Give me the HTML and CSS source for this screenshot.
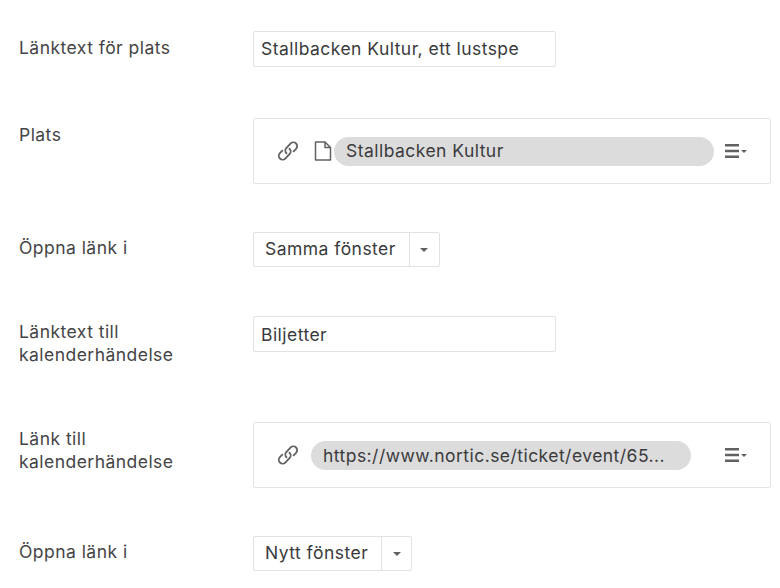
FILE: index.html
```html
<!DOCTYPE html>
<html lang="sv">
<head>
<meta charset="utf-8">
<title>Länkar</title>
<link rel="stylesheet" href="styles.css">
</head>
<body>
<svg width="0" height="0" class="defs">
  <defs>
    <symbol id="i-link" viewBox="0 0 24 24">
      <path d="M10.4 14.4a4 4 0 0 1-.3-5.600l4.900-5a4.100 4.100 0 0 1 5.800 5.800l-2.600 2.700M13.600 9.600a4 4 0 0 1 .3 5.600l-4.900 5a4.100 4.100 0 0 1-5.800-5.800l2.600-2.700" fill="none" stroke="currentColor" stroke-width="2" stroke-linecap="round"/>
    </symbol>
    <symbol id="i-page" viewBox="0 0 18 20">
      <path d="M1.500 1h9.500l5.500 5.500V19H1.500zM11 1v5.500h5.500" fill="none" stroke="currentColor" stroke-width="1.500" stroke-linejoin="round"/>
    </symbol>
    <symbol id="i-menu" viewBox="0 0 24 14">
      <path d="M0 0h14v2.400H0zM0 5.800h14v2.400H0zM0 11.600h14v2.400H0z" fill="currentColor"/>
      <path d="M16 6h6l-3 3z" fill="currentColor"/>
    </symbol>
  </defs>
</svg>
<form class="form">
  <div class="row gap-51">
    <label class="label label-low">Länktext för plats</label>
    <div class="input input-high">Stallbacken Kultur, ett lustspe</div>
  </div>
  <div class="row gap-48">
    <label class="label label-low">Plats</label>
    <div class="picker">
      <svg class="icon link"><use href="#i-link"/></svg>
      <svg class="icon page"><use href="#i-page"/></svg>
      <span class="pill pill-wide">Stallbacken Kultur</span>
      <svg class="icon menu"><use href="#i-menu"/></svg>
    </div>
  </div>
  <div class="row gap-49">
    <label class="label">Öppna länk i</label>
    <div class="select"><span class="select-text">Samma fönster</span><span class="select-btn"><i class="caret"></i></span></div>
  </div>
  <div class="row gap-56">
    <label class="label">Länktext till<br>kalenderhändelse</label>
    <div class="input">Biljetter</div>
  </div>
  <div class="row gap-48">
    <label class="label label-low">Länk till<br>kalenderhändelse</label>
    <div class="picker">
      <svg class="icon link"><use href="#i-link"/></svg>
      <span class="pill pill-url">https://www.nortic.se/ticket/event/65...</span>
      <svg class="icon menu menu-push"><use href="#i-menu"/></svg>
    </div>
  </div>
  <div class="row">
    <label class="label">Öppna länk i</label>
    <div class="select"><span class="select-text">Nytt fönster</span><span class="select-btn"><i class="caret"></i></span></div>
  </div>
</form>
</body>
</html>
```
FILE: styles.css
```css
html, body {
  margin: 0;
  background: #fff;
}
body {
  width: 780px;
  height: 588px;
  overflow: hidden;
  font-family: Inter, "Liberation Sans", sans-serif;
  font-size: 17.5px;
  letter-spacing: 0.46px;
  color: #3a3a3c;
}
.defs {
  position: absolute;
}
.form {
  display: flex;
  flex-direction: column;
  padding: 31px 9px 0 19px;
}
.row {
  display: flex;
  align-items: flex-start;
}
.gap-51 { margin-bottom: 51px; }
.gap-48 { margin-bottom: 48px; }
.gap-49 { margin-bottom: 49px; }
.gap-56 { margin-bottom: 56px; }
.label {
  width: 234px;
  flex: none;
  line-height: 23px;
  padding-top: 4px;
  color: #444446;
}
.label-low {
  padding-top: 5px;
}
.input {
  box-sizing: border-box;
  width: 303px;
  height: 36px;
  padding-left: 7px;
  line-height: 35px;
  border: 1px solid #e2e2e2;
  border-radius: 2px;
  white-space: nowrap;
}
.input-high {
  line-height: 34px;
}
.picker {
  box-sizing: border-box;
  width: 518px;
  height: 66px;
  display: flex;
  align-items: center;
  padding-left: 23px;
  border: 1px solid #e4e4e4;
  border-radius: 2px;
}
.icon {
  flex: none;
  color: #616161;
}
.link {
  width: 22px;
  height: 22px;
}
.page {
  width: 18px;
  height: 20px;
  margin-left: 15px;
}
.menu {
  width: 24px;
  height: 14px;
  margin-left: 11px;
}
.pill {
  box-sizing: border-box;
  height: 29px;
  line-height: 29px;
  border-radius: 15px;
  background: #dcdcdc;
  padding-left: 12px;
  white-space: nowrap;
}
.pill-wide {
  width: 380px;
  margin-left: 2px;
  line-height: 27px;
}
.pill-url {
  width: 380px;
  margin-left: 12px;
}
.menu-push {
  margin-left: 34px;
}
.select {
  display: inline-flex;
  height: 35px;
  box-sizing: border-box;
  border: 1px solid #e2e2e2;
  border-radius: 2px;
}
.select-text {
  padding: 0 13px 0 11px;
  line-height: 32px;
  border-right: 1px solid #e2e2e2;
  white-space: nowrap;
}
.select-btn {
  width: 29px;
  display: flex;
  align-items: center;
  justify-content: center;
}
.caret {
  width: 0;
  height: 0;
  border-left: 4.500px solid transparent;
  border-right: 4.500px solid transparent;
  border-top: 4.500px solid #616161;
}
```
